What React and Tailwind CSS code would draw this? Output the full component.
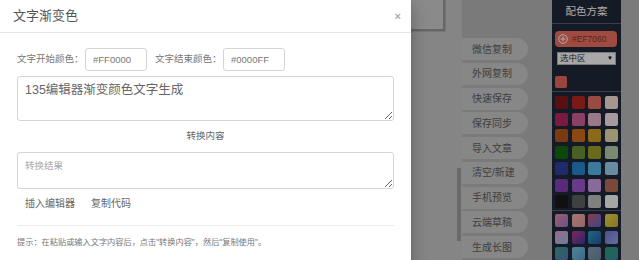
const pills = ['微信复制', '外网复制', '快速保存', '保存同步', '导入文章', '清空/新建', '手机预览', '云端草稿', '生成长图'];

const solids = [
  'bg-[#871818]', 'bg-[#b6271e]', 'bg-[#e66f60]', 'bg-[#f8e0d6]',
  'bg-[#b62760]', 'bg-[#ce5f95]', 'bg-[#e6b3cb]', 'bg-[#f8e6ec]',
  'bg-[#b6571b]', 'bg-[#ce6e1b]', 'bg-[#ce9e27]', 'bg-[#e6ddaa]',
  'bg-[#0f6e0f]', 'bg-[#6e8f30]', 'bg-[#9e9e27]', 'bg-[#b6ceaa]',
  'bg-[#2d3f9e]', 'bg-[#2786ce]', 'bg-[#57b6e6]', 'bg-[#9ecef0]',
  'bg-[#863fb6]', 'bg-[#9e57ce]', 'bg-[#ce9ee6]', 'bg-[#b66e57]',
  'bg-[#181818]', 'bg-[#606060]', 'bg-[#bfbfbf]', 'bg-[#f8f8f8]',
];

const gradients = [
  'bg-[linear-gradient(135deg,#f08aa0,#9a7ad0)]', 'bg-[linear-gradient(135deg,#f4b0a8,#e09aa0)]', 'bg-[linear-gradient(135deg,#d05a7a,#5a6ac0)]', 'bg-[linear-gradient(135deg,#ecd448,#d0b030)]',
  'bg-[linear-gradient(135deg,#e0a0d0,#a0c0e0)]', 'bg-[linear-gradient(135deg,#c03a8a,#3a3aa0)]', 'bg-[linear-gradient(135deg,#2a9aca,#2a5a9a)]', 'bg-[linear-gradient(135deg,#6a7ad0,#a0a0e8)]',
  'bg-[linear-gradient(135deg,#3aa08a,#5a7aba)]', 'bg-[linear-gradient(135deg,#7ac0e0,#5aa0d0)]', 'bg-[linear-gradient(135deg,#8a9ab0,#6a8aa0)]', 'bg-[linear-gradient(135deg,#2aa07a,#3a8a9a)]',
];

function PlusCircle() {
  return (
    <svg width="10" height="10" viewBox="0 0 10 10" fill="none" stroke="#fff" strokeWidth="1">
      <circle cx="5" cy="5" r="4.3" />
      <path d="M5 2.6v4.8M2.6 5h4.8" />
    </svg>
  );
}

function Swatches({ items }) {
  return (
    <div className="grid grid-cols-[repeat(4,13px)] gap-[3.5px] px-[3px]">
      {items.map((c, i) => (
        <div key={i} className={`h-[13px] w-[13px] rounded-[2px] ${c}`} />
      ))}
    </div>
  );
}

function Page() {
  return (
    <div className="flex h-full">
      <div className="flex w-[462px] flex-col bg-[#c7c7c7]">
        <div className="h-[31px] w-[445px] border-r-[2px] border-b-[2px] border-[#999] bg-[#cecece] shadow-[1px_1px_0_#b0b0b0]" />
        <div className="mt-[137px] mr-[1px] h-[73px] w-[4px] self-end bg-[#9e9e9e]" />
      </div>
      <div className="flex w-[90px] flex-col gap-[2.75px] bg-[#b6b6b6] pt-[38px]">
        {pills.map((p) => (
          <div key={p} className="flex h-[22px] w-[66px] items-center rounded-r-full bg-[#c9c9c9] pl-[10px] text-[10px] text-[#606060]">
            {p}
          </div>
        ))}
      </div>
      <div className="w-[69px] bg-[#1e283a]">
        <div className="flex h-[24px] items-center justify-center border-b border-[#575e6b] text-[10.5px] text-white">配色方案</div>
        <div className="px-[3px]">
          <div className="mt-[7px] flex h-[16px] w-[62px] items-center gap-[4px] rounded-[4px] bg-[#ef7060] pl-[3px] text-[8.5px] text-[#86362c]">
            <PlusCircle />
            <span>#EF7060</span>
          </div>
          <div className="mt-[5px] ml-[2px] flex h-[13px] w-[59px] items-center justify-between border border-[#b6b6b6] bg-[#fbfbfb] px-[2px] text-[8.5px] text-[#333]">
            <span>选中区</span>
            <span className="text-[6px] text-black">▼</span>
          </div>
          <div className="mt-[11px] h-[12px] w-[12px] rounded-[2px] bg-[#e8685a]" />
        </div>
        <div className="mt-[3px] border-t border-[#575e6b] pt-[4px]">
          <Swatches items={solids} />
        </div>
        <div className="mt-[2px] border-t border-[#575e6b] pt-[3px]">
          <Swatches items={gradients} />
        </div>
      </div>
      <div className="flex-1 bg-[#b8b8b8]" />
    </div>
  );
}

function Modal() {
  return (
    <div className="absolute top-0 left-0 h-[290px] w-[411px] bg-white shadow-[0_5px_15px_rgba(0,0,0,0.3)]">
      <div className="flex h-[33px] items-center justify-between border-b border-[#e5e5e5] pr-[10px] pl-[13px]">
        <span className="text-[13px] text-[#555]">文字渐变色</span>
        <span className="text-[11px] font-bold text-[#aaa]">×</span>
      </div>
      <div className="px-[17px]">
        <div className="mt-[15px] flex h-[23px] items-center text-[9.5px] text-[#777]">
          <span className="w-[68px]">文字开始颜色：</span>
          <input defaultValue="#FF0000" className="h-[23px] w-[62px] rounded-[3px] border border-[#d5d5d5] px-[7px] text-[9.5px] text-[#777] outline-none" />
          <span className="ml-[8px] w-[68px]">文字结束颜色：</span>
          <input defaultValue="#0000FF" className="h-[23px] w-[62px] rounded-[3px] border border-[#d5d5d5] px-[7px] text-[9.5px] text-[#777] outline-none" />
        </div>
        <textarea
          defaultValue="135编辑器渐变颜色文字生成"
          className="mt-[5px] block h-[45px] w-full rounded-[3px] border border-[#d5d5d5] px-[7px] pt-[5px] text-[12.5px] leading-[1.4] text-[#666] outline-none"
        />
        <div className="flex h-[31px] items-center justify-center text-[9.5px] text-[#666]">转换内容</div>
        <textarea
          placeholder="转换结果"
          className="block h-[37px] w-full rounded-[3px] border border-[#d5d5d5] px-[7px] pt-[6px] text-[9.5px] leading-[1.4] text-[#666] outline-none placeholder:text-[#aaa]"
        />
        <div className="flex h-[28px] items-center text-[10px] text-[#666]">
          <span className="px-[8px]">插入编辑器</span>
          <span className="px-[8px]">复制代码</span>
        </div>
        <div className="mt-[8px] border-t border-[#ebebeb]" />
        <div className="flex h-[34px] items-center text-[8.2px] text-[#777]">
          提示：在粘贴或输入文字内容后，点击"转换内容"，然后"复制使用"。
        </div>
      </div>
    </div>
  );
}

export default function App() {
  return (
    <div className="relative h-[260px] w-[639px] overflow-hidden font-['Liberation_Sans','Noto_Sans_CJK_SC',sans-serif]">
      <Page />
      <div className="absolute inset-0 bg-black/[0.33]" />
      <Modal />
    </div>
  );
}
